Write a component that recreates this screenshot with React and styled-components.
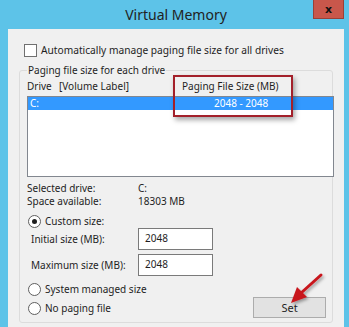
import styled, { createGlobalStyle } from "styled-components";

const GlobalStyle = createGlobalStyle`
  html, body {
    margin: 0;
    padding: 0;
    background: #5dc3e8;
  }
  body {
    font-family: "Noto Sans", "Segoe UI", sans-serif;
    font-size: 10px;
    color: #1e1e1e;
  }
`;

const Frame = styled.div`
  position: relative;
  width: 349px;
  height: 327px;
  background: #5dc3e8;
  overflow: hidden;
  display: flex;
  flex-direction: column;
`;

const TitleBar = styled.div`
  height: 29px;
  display: grid;
  grid-template-columns: 1fr auto 1fr;
  align-items: start;
`;

const Title = styled.div`
  grid-column: 2;
  font-size: 14px;
  line-height: 29px;
  color: #222;
  padding-left: 3px;
`;

const CloseButton = styled.div`
  grid-column: 3;
  justify-self: end;
  width: 31px;
  height: 19px;
  margin-right: 5px;
  background: #c9574b;
  border: 1px solid #9a4037;
  border-top: none;
  box-sizing: border-box;
  display: flex;
  align-items: center;
  justify-content: center;
  font-family: "DejaVu Sans", sans-serif;
  font-weight: bold;
  font-size: 11px;
  color: #111;
`;

const Content = styled.div`
  flex: 1;
  margin: 0 5px 0 8px;
  background: #f0f0f0;
  padding: 14px 11px 4px 11px;
  display: flex;
  flex-direction: column;
`;

const CheckRow = styled.label`
  display: flex;
  align-items: center;
  gap: 4px;
  height: 14px;
  padding-left: 5px;
  font-size: 10.2px;
`;

const Box = styled.span`
  width: 11px;
  height: 11px;
  border: 1px solid #707070;
  background: #fff;
`;

const Group = styled.fieldset`
  margin: 6px 0 0 0;
  padding: 0 0 4px 7px;
  border: 1px solid #dcdcdc;
  border-radius: 3px;
  flex: 1;
  min-width: 0;
  display: flex;
  flex-direction: column;
`;

const Legend = styled.legend`
  padding: 0 1px;
  line-height: 14px;
`;

const ListHeader = styled.div`
  display: grid;
  grid-template-columns: 32px 123px 1fr;
  line-height: 14px;
  margin-top: 2px;
  margin-bottom: 3px;
`;

const ListBox = styled.div`
  height: 81px;
  margin-right: -2px;
  border: 1px solid #82878f;
  background: #fff;
  box-sizing: border-box;
`;

const ListRow = styled.div`
  display: grid;
  grid-template-columns: 154px 1fr;
  height: 13px;
  line-height: 13px;
  background: ${(p) => (p.$selected ? "#3399ff" : "transparent")};
  color: ${(p) => (p.$selected ? "#fff" : "inherit")};
  padding-left: 2px;
  span:last-child {
    padding-left: 30px;
  }
`;

const InfoGrid = styled.div`
  display: grid;
  grid-template-columns: 111px 1fr;
  line-height: 13px;
  margin-top: 5px;
`;

const RadioRow = styled.div`
  display: flex;
  align-items: center;
  gap: 4px;
  height: 16px;
  padding-left: 1px;
  margin-top: ${(p) => p.$gap || 0}px;
`;

const Radio = styled.span`
  width: 11px;
  height: 11px;
  border-radius: 50%;
  border: 1px solid #5f5f5f;
  background: #fff;
  display: flex;
  align-items: center;
  justify-content: center;
  &::after {
    content: "";
    width: 5px;
    height: 5px;
    border-radius: 50%;
    background: ${(p) => (p.$checked ? "#1e1e1e" : "transparent")};
  }
`;

const SizeGrid = styled.div`
  display: grid;
  grid-template-columns: 107px 75px;
  row-gap: 4px;
  align-items: center;
  padding-left: 4px;
  margin-top: -1px;
`;

const Field = styled.div`
  height: 22px;
  box-sizing: border-box;
  border: 1px solid #7a7a7a;
  background: #fff;
  padding: 2px 0 0 6px;
  line-height: 14px;
`;

const Bottom = styled.div`
  display: flex;
  justify-content: space-between;
  align-items: flex-end;
  margin-top: auto;
  padding-right: 6px;
`;

const RadioStack = styled.div`
  display: flex;
  flex-direction: column;
  gap: 3px;
  margin-bottom: 2px;
`;

const Button = styled.div`
  width: 73px;
  height: 21px;
  box-sizing: border-box;
  border: 1px solid #acacac;
  background: #e2e2e2;
  display: flex;
  align-items: center;
  justify-content: center;
  font-size: 11px;
`;

const Highlight = styled.div`
  position: absolute;
  left: 173px;
  top: 75px;
  width: 120px;
  height: 42px;
  box-sizing: border-box;
  border: 2px solid #a3202a;
  box-shadow: 2px 3px 5px rgba(0, 0, 0, 0.35);
  pointer-events: none;
`;

const Arrow = styled.svg`
  position: absolute;
  left: 284px;
  top: 269px;
  overflow: visible;
`;

export default function App() {
  return (
    <>
      <GlobalStyle />
      <Frame>
        <TitleBar>
          <Title>Virtual Memory</Title>
          <CloseButton>x</CloseButton>
        </TitleBar>
        <Content>
          <CheckRow>
            <Box />
            Automatically manage paging file size for all drives
          </CheckRow>
          <Group>
            <Legend>Paging file size for each drive</Legend>
            <ListHeader>
              <span>Drive</span>
              <span>[Volume Label]</span>
              <span>Paging File Size (MB)</span>
            </ListHeader>
            <ListBox>
              <ListRow $selected>
                <span>C:</span>
                <span>2048 - 2048</span>
              </ListRow>
            </ListBox>
            <InfoGrid>
              <span>Selected drive:</span>
              <span>C:</span>
              <span>Space available:</span>
              <span>18303 MB</span>
            </InfoGrid>
            <RadioRow $gap={5}>
              <Radio $checked />
              Custom size:
            </RadioRow>
            <SizeGrid>
              <span>Initial size (MB):</span>
              <Field>2048</Field>
              <span>Maximum size (MB):</span>
              <Field>2048</Field>
            </SizeGrid>
            <Bottom>
              <RadioStack>
                <RadioRow>
                  <Radio />
                  System managed size
                </RadioRow>
                <RadioRow>
                  <Radio />
                  No paging file
                </RadioRow>
              </RadioStack>
              <Button>Set</Button>
            </Bottom>
          </Group>
        </Content>
        <Highlight />
        <Arrow width="45" height="40" viewBox="0 0 45 40">
          <defs>
            <filter id="sh" x="-30%" y="-30%" width="160%" height="160%">
              <feDropShadow dx="1.5" dy="2" stdDeviation="1.5" floodOpacity="0.35" />
            </filter>
          </defs>
          <g filter="url(#sh)">
            <line x1="37" y1="6" x2="17" y2="24" stroke="#c8161d" strokeWidth="3" strokeLinecap="round" />
            <polygon points="7,34 13,18 23,28" fill="#c8161d" />
          </g>
        </Arrow>
      </Frame>
    </>
  );
}
